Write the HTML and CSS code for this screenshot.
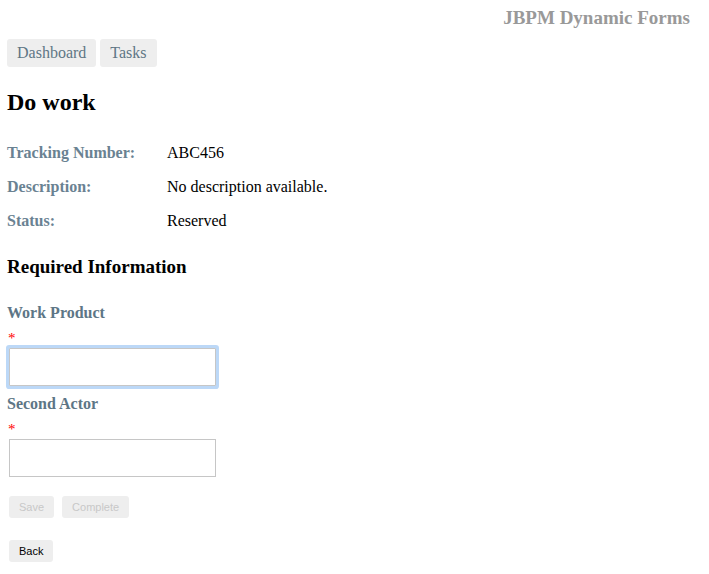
FILE: index.html
```html
<!DOCTYPE html>
<html>
<head>
<meta charset="utf-8">
<link rel="stylesheet" href="styles.css">
</head>
<body>
<header class="top">
  <div class="brand">JBPM Dynamic Forms</div>
</header>
<nav class="nav">
  <a class="nav-btn">Dashboard</a>
  <a class="nav-btn">Tasks</a>
</nav>
<h1 class="title">Do work</h1>
<div class="info">
  <div class="info-row"><span class="info-label">Tracking Number:</span><span class="info-value">ABC456</span></div>
  <div class="info-row"><span class="info-label">Description:</span><span class="info-value">No description available.</span></div>
  <div class="info-row"><span class="info-label">Status:</span><span class="info-value">Reserved</span></div>
</div>
<h2 class="section">Required Information</h2>
<form class="form">
  <div class="field">
    <label class="field-label">Work Product</label>
    <div class="req">*</div>
    <input class="input focused" type="text">
  </div>
  <div class="field">
    <label class="field-label">Second Actor</label>
    <div class="req">*</div>
    <input class="input" type="text">
  </div>
  <div class="actions">
    <button class="btn disabled" type="button">Save</button>
    <button class="btn disabled" type="button">Complete</button>
  </div>
  <div class="actions back-row">
    <button class="btn" type="button">Back</button>
  </div>
</form>
</body>
</html>
```
FILE: styles.css
```css
html, body { margin: 0; padding: 0; background: #fff; }
body {
  font-family: "Liberation Serif", "Times New Roman", serif;
  color: #000;
  padding: 0 7px;
}
.top {
  display: flex;
  justify-content: flex-end;
  padding-top: 7px;
  padding-right: 12px;
  height: 33px;
  box-sizing: border-box;
}
.brand {
  font-weight: bold;
  font-size: 19px;
  color: #999;
  line-height: 22px;
}
.nav {
  display: flex;
  gap: 4px;
  margin-top: 6px;
}
.nav-btn {
  display: inline-block;
  background: #eee;
  border-radius: 3px;
  color: #5f7685;
  font-size: 16px;
  height: 28px;
  line-height: 28px;
  padding: 0 10px;
  box-sizing: border-box;
}
.title {
  font-size: 24px;
  font-weight: bold;
  margin: 21px 0 0 0;
  line-height: 28px;
}
.info {
  margin-top: 27px;
  display: flex;
  flex-direction: column;
  gap: 15px;
}
.info-row {
  display: flex;
  font-size: 16px;
  line-height: 19px;
}
.info-label {
  width: 160px;
  font-weight: bold;
  color: #6a8292;
  font-size: 16px;
}
.info-value { color: #000; }
.section {
  font-size: 19px;
  font-weight: bold;
  margin: 26px 0 0 0;
  line-height: 22px;
}
.form { margin-top: 25px; }
.field { display: flex; flex-direction: column; align-items: flex-start; }
.field + .field { margin-top: 8px; }
.field-label {
  font-weight: bold;
  font-size: 16px;
  color: #5d7686;
  line-height: 19px;
}
.req {
  color: #f00;
  font-size: 15px;
  line-height: 16px;
  margin-top: 8px;
  margin-left: 1px;
}
.input {
  width: 207px;
  height: 38px;
  box-sizing: border-box;
  border: 1px solid #c6c6c6;
  margin: 2px 0 0 2px;
  padding: 0;
  outline: none;
  background: #fff;
}
.input.focused {
  box-shadow: 0 0 0 3px #bcd8f7;
  border-radius: 1px;
}
.actions {
  display: flex;
  gap: 8px;
  margin-top: 19px;
  margin-left: 2px;
}
.back-row { margin-top: 22px; }
.btn {
  font-family: "Liberation Sans", Arial, sans-serif;
  font-size: 11px;
  height: 22px;
  padding: 0 10px;
  background: #eee;
  border: none;
  border-radius: 3px;
  color: #000;
}
.btn.disabled { color: #c8c8c8; }
```
